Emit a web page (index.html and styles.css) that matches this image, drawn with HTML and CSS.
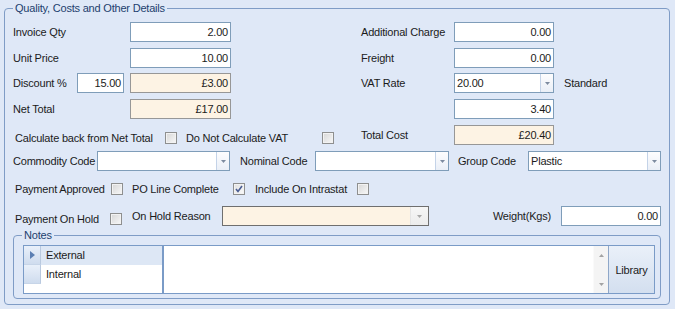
FILE: index.html
```html
<!DOCTYPE html>
<html lang="en">
<head>
    <meta charset="UTF-8">
    <meta name="viewport" content="width=device-width, initial-scale=1.0">
    <title>Quality, Costs and Other Details</title>
    <link rel="stylesheet" href="styles.css">
</head>
<body>
    <fieldset class="group">
        <legend>Quality, Costs and Other Details</legend>

        <div class="row">
            <span class="label lbl-left">Invoice Qty</span>
            <div class="field num w101">2.00</div>
            <span class="label lbl-right">Additional Charge</span>
            <div class="field num w100">0.00</div>
        </div>

        <div class="row gap6">
            <span class="label lbl-left">Unit Price</span>
            <div class="field num w101">10.00</div>
            <span class="label lbl-right">Freight</span>
            <div class="field num w100">0.00</div>
        </div>

        <div class="row gap5">
            <span class="label lbl-discount">Discount %</span>
            <div class="field num w47">15.00</div>
            <div class="field num peach w101 ml6">£3.00</div>
            <span class="label lbl-right">VAT Rate</span>
            <div class="combo w100">
                <span class="text">20.00</span>
                <span class="arrow"><svg width="5" height="3" viewBox="0 0 5 3"><path d="M0 0h5L2.5 3z" fill="#7d8ba0"/></svg></span>
            </div>
            <span class="label ml10">Standard</span>
        </div>

        <div class="row gap6">
            <span class="label lbl-left">Net Total</span>
            <div class="field num peach w101">£17.00</div>
            <span class="label lbl-right"></span>
            <div class="field num w100">3.40</div>
        </div>

        <div class="row gap6">
            <span class="label low ml2 w150">Calculate back from Net Total</span>
            <span class="check low"></span>
            <span class="label low ml9 w136">Do Not Calculate VAT</span>
            <span class="check low"></span>
            <span class="label ml27 w93">Total Cost</span>
            <div class="field num peach w100">£20.40</div>
        </div>

        <div class="row gap6">
            <span class="label w84">Commodity Code</span>
            <div class="combo w133">
                <span class="text"></span>
                <span class="arrow"><svg width="5" height="3" viewBox="0 0 5 3"><path d="M0 0h5L2.5 3z" fill="#7d8ba0"/></svg></span>
            </div>
            <span class="label ml10 w75">Nominal Code</span>
            <div class="combo w134">
                <span class="text"></span>
                <span class="arrow"><svg width="5" height="3" viewBox="0 0 5 3"><path d="M0 0h5L2.5 3z" fill="#7d8ba0"/></svg></span>
            </div>
            <span class="label ml9 w70">Group Code</span>
            <div class="combo w133">
                <span class="text">Plastic</span>
                <span class="arrow"><svg width="5" height="3" viewBox="0 0 5 3"><path d="M0 0h5L2.5 3z" fill="#7d8ba0"/></svg></span>
            </div>
        </div>

        <div class="row gap8">
            <span class="label ml2 w96">Payment Approved</span>
            <span class="check"></span>
            <span class="label ml9 w101">PO Line Complete</span>
            <span class="check checked"><svg width="8" height="8" viewBox="0 0 8 8"><path d="M1 4l2 2.5L7 1" fill="none" stroke="#4a5d93" stroke-width="1.6"/></svg></span>
            <span class="label ml10 w102">Include On Intrastat</span>
            <span class="check"></span>
        </div>

        <div class="row gap7">
            <span class="label low ml2 w95">Payment On Hold</span>
            <span class="check low"></span>
            <span class="label ml10 w90">On Hold Reason</span>
            <div class="combo disabled w207">
                <span class="text"></span>
                <span class="arrow"><svg width="5" height="3" viewBox="0 0 5 3"><path d="M0 0h5L2.5 3z" fill="#a8a8a8"/></svg></span>
            </div>
            <span class="label weight">Weight(Kgs)</span>
            <div class="field num w100">0.00</div>
        </div>

        <fieldset class="notes">
            <legend>Notes</legend>
            <div class="notes-box">
                <div class="note-grid">
                    <div class="grid-row selected">
                        <span class="row-head"><svg width="5" height="8" viewBox="0 0 5 8"><path d="M0 0l5 4-5 4z" fill="#5b7fb3"/></svg></span>
                        <span class="cell">External</span>
                    </div>
                    <div class="grid-row">
                        <span class="row-head"></span>
                        <span class="cell">Internal</span>
                    </div>
                </div>
                <div class="memo"></div>
                <div class="scrollbar">
                    <svg width="5" height="3" viewBox="0 0 5 3"><path d="M0 3h5L2.5 0z" fill="#a3a3a3"/></svg>
                    <svg width="5" height="3" viewBox="0 0 5 3"><path d="M0 0h5L2.5 3z" fill="#a3a3a3"/></svg>
                </div>
                <div class="library">Library</div>
            </div>
        </fieldset>
    </fieldset>
</body>
</html>
```

FILE: styles.css
```css
body {
    margin: 0;
    height: 309px;
    overflow: hidden;
    background-color: #dfe8f7;
    font-family: "Liberation Sans", Arial, sans-serif;
    font-size: 11px;
    letter-spacing: -0.2px;
    color: #1b1b1b;
}
.group {
    margin: 1px 5px 0 4px;
    padding: 7px 8px 5px 8px;
    border: 1px solid #7f9cc6;
    border-radius: 4px;
    min-width: 0;
}
.group > legend {
    padding: 0 2px;
    line-height: 14px;
    color: #22406e;
}
.row {
    display: flex;
    align-items: center;
    height: 20px;
}
.gap5 { margin-top: 5px; }
.gap6 { margin-top: 6px; }
.gap7 { margin-top: 7px; }
.gap8 { margin-top: 8px; }

.label {
    flex-shrink: 0;
    white-space: nowrap;
    line-height: 14px;
}
.lbl-left { width: 117px; }
.lbl-discount { width: 64px; }
.lbl-right {
    width: 93px;
    margin-left: 130px;
    height: 14px;
}
.low { margin-top: 5px; }
.weight {
    margin-left: auto;
    margin-right: 10px;
}

.ml2 { margin-left: 2px; }
.ml6 { margin-left: 6px; }
.ml9 { margin-left: 9px; }
.ml10 { margin-left: 10px; }
.ml27 { margin-left: 27px; }
.w47 { width: 47px; }
.w70 { width: 70px; }
.w75 { width: 75px; }
.w84 { width: 84px; }
.w90 { width: 90px; }
.w93 { width: 93px; }
.w95 { width: 95px; }
.w96 { width: 96px; }
.w100 { width: 100px; }
.w101 { width: 101px; }
.w102 { width: 102px; }
.w133 { width: 133px; }
.w134 { width: 134px; }
.w136 { width: 136px; }
.w150 { width: 150px; }
.w207 { width: 207px; }

.field {
    flex-shrink: 0;
    box-sizing: border-box;
    height: 20px;
    padding: 0 2px;
    border: 1px solid #7f9db9;
    background-color: #fff;
    line-height: 18px;
    white-space: nowrap;
}
.field.num {
    text-align: right;
}
.field.peach {
    background-color: #fdf3e4;
    border-color: #979797;
}

.combo {
    flex-shrink: 0;
    display: flex;
    box-sizing: border-box;
    height: 20px;
    border: 1px solid #7f9db9;
    background-color: #fff;
}
.combo .text {
    flex: 1;
    padding-left: 2px;
    line-height: 18px;
}
.combo .arrow {
    width: 12px;
    display: flex;
    align-items: center;
    justify-content: center;
    border-left: 1px solid #c4d3e8;
    background: linear-gradient(#fdfdfe, #eaeff7);
}
.combo.disabled {
    border-color: #6f6f6f;
    background-color: #fdf3e4;
}
.combo.disabled .arrow {
    width: 17px;
    border-left: 1px solid #e4e4e4;
    background: linear-gradient(#f6f6f6, #ececec);
}

.check {
    flex-shrink: 0;
    box-sizing: border-box;
    width: 12px;
    height: 12px;
    border: 1px solid #8e8f8f;
    background: linear-gradient(135deg, #d6d6d6, #f8f8f8);
    box-shadow: inset 0 0 0 1px #f2f2f2;
    display: flex;
    align-items: center;
    justify-content: center;
}
.check.checked {
    background: linear-gradient(135deg, #e0e0e0, #fbfbfb);
}

.notes {
    margin: 2px 0 0 0;
    padding: 3px 5px 4px 9px;
    border: 1px solid #7f9cc6;
    border-radius: 4px;
    min-width: 0;
}
.notes > legend {
    margin-left: -1px;
    padding: 0 2px;
    line-height: 14px;
    color: #22406e;
}
.notes-box {
    display: flex;
    height: 49px;
    box-sizing: border-box;
    border: 1px solid #7a9bc7;
    background-color: #fff;
}
.note-grid {
    width: 138px;
    border-right: 2px solid #7a9bc7;
}
.grid-row {
    display: flex;
    height: 19px;
}
.row-head {
    width: 16px;
    display: flex;
    align-items: center;
    justify-content: center;
    border-right: 1px solid #b9c9df;
    border-bottom: 1px solid #c7d5e8;
    background: linear-gradient(#e9f0fa, #cfdcee);
}
.cell {
    flex: 1;
    padding-left: 5px;
    line-height: 19px;
}
.grid-row.selected .cell {
    background-color: #dde7f5;
}
.memo {
    flex: 1;
}
.scrollbar {
    width: 15px;
    display: flex;
    flex-direction: column;
    align-items: center;
    justify-content: space-between;
    padding: 8px 0 7px;
    box-sizing: border-box;
    background-color: #f4f4f4;
    border-left: 1px solid #fafafa;
}
.library {
    width: 45px;
    display: flex;
    align-items: center;
    justify-content: center;
    border-left: 1px solid #8fa7c8;
    background: linear-gradient(#eaf0f9, #d3dfef);
}
```
